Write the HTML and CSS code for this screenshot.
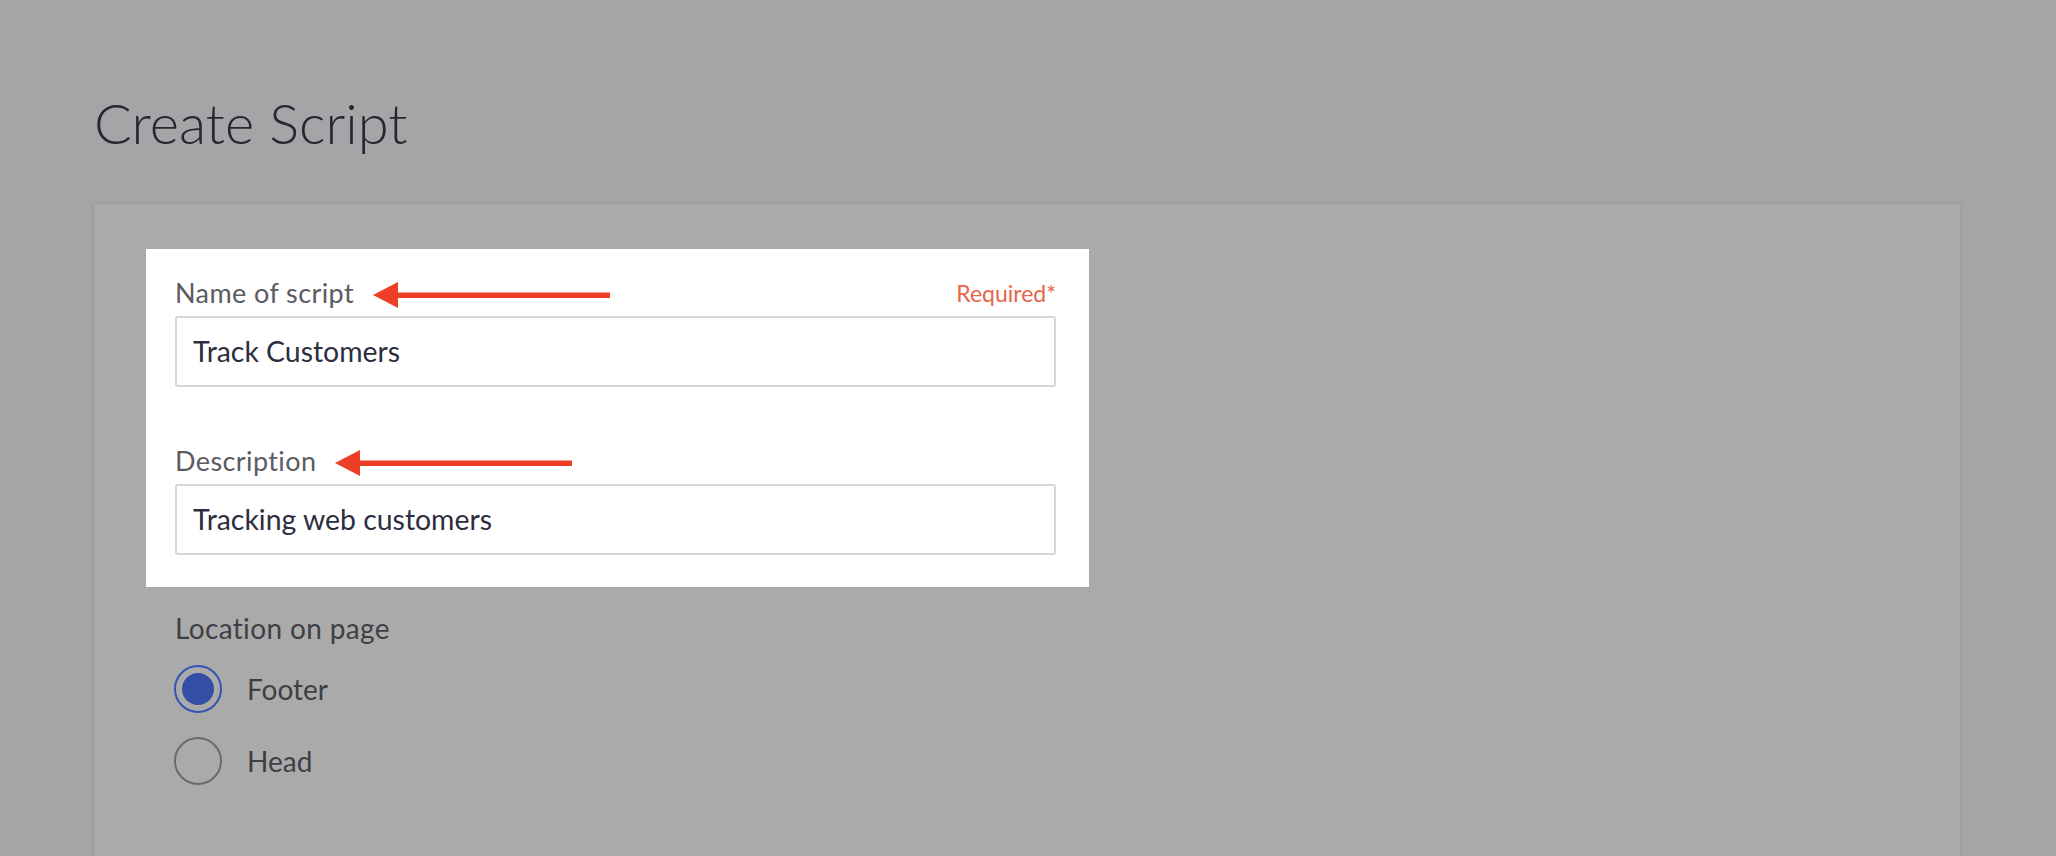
FILE: index.html
```html
<!DOCTYPE html>
<html lang="en">
<head>
<meta charset="utf-8">
<title>Create Script</title>
<link rel="stylesheet" href="styles.css">
</head>
<body>
<div class="page">
  <h1 class="title">Create Script</h1>
  <div class="card">
    <div class="highlight">
      <div class="field">
        <div class="label-row">
          <div class="label">
            <span>Name of script</span>
            <svg class="arrow" width="237" height="26" viewBox="0 0 237 26"><polygon points="0,13 25,0 25,26" fill="#ec3f26"/><rect x="23" y="10.5" width="214" height="5.5" fill="#ec3f26"/></svg>
          </div>
          <span class="required">Required*</span>
        </div>
        <div class="input">Track Customers</div>
      </div>
      <div class="field">
        <div class="label-row">
          <div class="label">
            <span>Description</span>
            <svg class="arrow" width="237" height="26" viewBox="0 0 237 26"><polygon points="0,13 25,0 25,26" fill="#ec3f26"/><rect x="23" y="10.5" width="214" height="5.5" fill="#ec3f26"/></svg>
          </div>
        </div>
        <div class="input">Tracking web customers</div>
      </div>
    </div>
    <div class="location">
      <div class="loc-label">Location on page</div>
      <div class="radio-row">
        <span class="radio checked"><span class="dot"></span></span>
        <span class="radio-text">Footer</span>
      </div>
      <div class="radio-row">
        <span class="radio"></span>
        <span class="radio-text">Head</span>
      </div>
    </div>
  </div>
</div>
</body>
</html>
```

FILE: styles.css
```css
html, body {
  margin: 0;
  padding: 0;
}
body {
  background: #a4a5a7;
  font-family: "Lato", "Open Sans", "Liberation Sans", sans-serif;
  overflow: hidden;
}
.page {
  height: 856px;
  box-sizing: border-box;
  padding: 89px 0 0 94px;
  overflow: hidden;
}
.title {
  margin: 0;
  font-size: 56px;
  line-height: 68px;
  font-weight: 300;
  color: #27282e;
}
.card {
  margin-top: 47px;
  width: 1866px;
  height: 700px;
  box-sizing: border-box;
  padding: 45px 0 0 52px;
  background: #aaaaaa;
  box-shadow: 0 0 3px rgba(0, 0, 0, 0.12);
}
.highlight {
  width: 943px;
  box-sizing: border-box;
  padding: 28px 33px 32px 29px;
  background: #ffffff;
}
.field + .field {
  margin-top: 58px;
}
.label-row {
  display: flex;
  justify-content: space-between;
  align-items: flex-start;
  height: 32px;
  margin-bottom: 7px;
}
.label {
  display: flex;
  align-items: center;
  font-size: 27px;
  letter-spacing: 0.4px;
  line-height: 32px;
  color: #5a5b63;
}
.arrow {
  display: block;
  margin-left: 19px;
  margin-top: 3px;
}
.required {
  font-size: 23px;
  line-height: 32px;
  color: #e9644a;
}
.input {
  height: 71px;
  box-sizing: border-box;
  border: 2px solid #d6d6d6;
  border-radius: 3px;
  padding-left: 16px;
  font-size: 28.4px;
  line-height: 67px;
  color: #2c2e3e;
}
.location {
  padding: 25px 0 0 29px;
}
.loc-label {
  font-size: 28px;
  letter-spacing: 0.35px;
  line-height: 32px;
  color: #3f4045;
  margin-bottom: 21px;
}
.radio-row {
  display: flex;
  align-items: center;
  height: 48px;
}
.radio-row + .radio-row {
  margin-top: 24px;
}
.radio {
  width: 48px;
  height: 48px;
  box-sizing: border-box;
  border: 2px solid #6a6a6a;
  border-radius: 50%;
  display: flex;
  align-items: center;
  justify-content: center;
  margin-left: -1px;
}
.radio.checked {
  border-color: #3552b5;
}
.dot {
  width: 32px;
  height: 32px;
  border-radius: 50%;
  background: #354ea5;
}
.radio-text {
  margin-left: 25px;
  font-size: 28px;
  line-height: 32px;
  color: #3e3f44;
}
```
